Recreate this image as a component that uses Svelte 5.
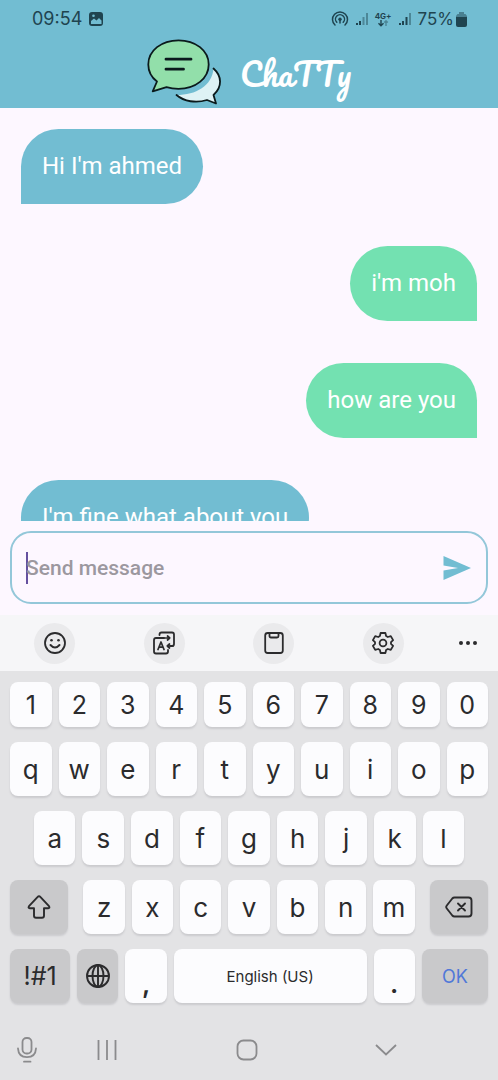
<script>
  const messages = [
    { text: "Hi I'm ahmed", mine: false },
    { text: "i'm moh", mine: true },
    { text: 'how are you', mine: true },
    { text: "I'm fine what about you", mine: false }
  ];
  const digits = [...'1234567890'];
  const top = [...'qwertyuiop'];
  const home = [...'asdfghjkl'];
  const bottom = [...'zxcvbnm'];

  let draft = $state('');
  const type = (c) => (draft += c);
</script>

<div class="phone">
  <header>
    <div class="status">
      <span class="time">09:54</span>
      <svg class="photo" width="16" height="16" viewBox="0 0 16 16">
        <rect x="1" y="1" width="14" height="14" rx="3" fill="#1f4450" />
        <path d="M3 10l3-2.500 2.500 2L11 7l2.500 2.500V13H3z" fill="#72bdd2" />
        <circle cx="5.500" cy="4.700" r="1.300" fill="#72bdd2" />
      </svg>
      <span class="spacer"></span>
      <svg width="18" height="18" viewBox="0 0 18 18" fill="none" stroke="#1f4450" stroke-width="1.500" stroke-linecap="round">
        <path d="M4 15a7.500 7.500 0 1 1 10 0M5.800 12.300a4.500 4.500 0 1 1 6.400 0" />
        <circle cx="9" cy="9.300" r="1.700" fill="#1f4450" stroke="none" />
        <path d="M9 10.500V13" />
      </svg>
      <svg width="14" height="14" viewBox="0 0 14 14" fill="#1f4450">
        <path d="M1 11h2v2H1zM4 9h2v4H4z" /><path opacity=".45" d="M7.500 5h2v8h-2zM11 1h2v12h-2z" />
      </svg>
      <span class="net">
        <span>4G+</span>
        <svg width="12" height="7" viewBox="0 0 12 7" fill="none" stroke="#1f4450" stroke-width="1.400">
          <path d="M4 0v5.500M1.500 3.300L4 5.800 6.500 3.300" /><path opacity=".45" d="M9 6V1M7.200 2.500L9 .8l1.800 1.700" />
        </svg>
      </span>
      <svg width="14" height="14" viewBox="0 0 14 14" fill="#1f4450">
        <path d="M1 11h2v2H1zM4 9h2v4H4zM7.500 5h2v8h-2z" /><path opacity=".45" d="M11 1h2v12h-2z" />
      </svg>
      <span class="charge">75%</span>
      <svg class="battery" width="11" height="15" viewBox="0 0 11 15" fill="#1f4450">
        <path opacity=".5" d="M3 0h5v2h1.500L11 4v1H0V4l1.500-2H3z" /><path d="M0 5h11v8q0 2-2 2H2q-2 0-2-2z" />
      </svg>
    </div>
    <div class="brand">
      <svg width="75" height="67" viewBox="147 38 75 67" stroke-linecap="round" stroke-linejoin="round">
        <path d="M213.500 68.500C222 76 222.500 87 213.500 95L216 103.500 207 100C196 103.500 184 101.500 176.500 95 196 95 212 86 213.500 68.500z" fill="#def2f5" />
        <path d="M213.500 68.500C222 76 222.500 87 213.500 95L216 103.500 207 100C196 103.500 184 101.500 176.500 95" fill="none" stroke="#0b1a1c" stroke-width="1.800" />
        <path d="M157 81.500C151 77 148.300 71 148.300 64.500 148.300 50.500 161.500 40.300 178.500 40.300S208.700 50.500 208.700 64.500 195.500 88.800 178.500 88.800Q172 88.800 166.500 87.200L152.700 91.300z" fill="#92dfaa" stroke="#0b1a1c" stroke-width="1.800" />
        <path d="M166 59.200h25M166 69.200h17.500" stroke="#0b1a1c" stroke-width="2.800" />
      </svg>
      <h1>ChaTTy</h1>
    </div>
  </header>

  <main>
    {#each messages as m}
      <p class="bubble" class:mine={m.mine}>{m.text}</p>
    {/each}
  </main>

  <form class="composer" onsubmit={(e) => e.preventDefault()}>
    <span class="caret"></span>
    <input type="text" placeholder="Send message" aria-label="Send message" bind:value={draft} />
    <button class="send" aria-label="Send">
      <svg width="28" height="24" viewBox="0 0 28 24"><path d="M.500 0L28 12 .500 24V14.500L15 12 .500 9.500z" fill="#72bdd2" /></svg>
    </button>
  </form>

  <div class="tools">
    <button aria-label="Emoji">
      <svg width="24" height="24" viewBox="0 0 24 24" fill="none" stroke="#2b2b2d" stroke-width="1.800" stroke-linecap="round">
        <circle cx="12" cy="12" r="10" /><path d="M7.500 14q4.500 5 9 0" stroke-width="2" />
        <g fill="#2b2b2d" stroke="none"><circle cx="8.500" cy="9.300" r="1.300" /><circle cx="15.500" cy="9.300" r="1.300" /></g>
      </svg>
    </button>
    <button aria-label="Translate">
      <svg width="24" height="24" viewBox="0 0 24 24" fill="none" stroke="#2b2b2d" stroke-width="1.800" stroke-linecap="round" stroke-linejoin="round">
        <path d="M7.500 4V3.500q0-2 2-2H20q2 0 2 2V13q0 2-2 2h-1.500" />
        <path d="M12 7H4Q2 7 2 9V20.500q0 2 2 2H14q2 0 2-2V19" />
        <path d="M6 18.500L9 11l3 7.500M7 16.200h4M11 7h6.500M15.500 5l2.200 2-2.200 2M21 15h-5M17.500 13l-2.200 2 2.200 2" stroke-width="1.700" />
      </svg>
    </button>
    <button aria-label="Clipboard">
      <svg width="24" height="24" viewBox="0 0 24 24" fill="none" stroke="#2b2b2d" stroke-width="1.800" stroke-linejoin="round">
        <rect x="3.200" y="2" width="17.600" height="20" rx="2.500" /><path d="M7.500 2v3q0 1.500 1.500 1.500h6q1.500 0 1.500-1.500V2" />
      </svg>
    </button>
    <button aria-label="Settings">
      <svg width="24" height="24" viewBox="0 0 24 24" fill="none" stroke="#2b2b2d" stroke-width="1.800" stroke-linejoin="round">
        <path d="M9.600 2h4.800l.7 3 1.700 1 3-.9 2.300 4L20 11.100v1.800l2.100 2-2.300 4-3-.9-1.700 1-.7 3H9.600l-.7-3-1.700-1-3 .9-2.300-4 2.100-2v-1.800l-2.100-2 2.300-4 3 .9 1.700-1z" />
        <circle cx="12" cy="12" r="3.400" />
      </svg>
    </button>
    <button class="plain" aria-label="More">
      <svg width="20" height="6" viewBox="0 0 20 6" fill="#2b2b2d"><circle cx="3" cy="3" r="2" /><circle cx="10" cy="3" r="2" /><circle cx="17" cy="3" r="2" /></svg>
    </button>
  </div>

  <div class="keys">
    <div class="row short">
      {#each digits as k}<button onclick={() => type(k)}>{k}</button>{/each}
    </div>
    <div class="row">
      {#each top as k}<button onclick={() => type(k)}>{k}</button>{/each}
    </div>
    <div class="row inset">
      {#each home as k}<button onclick={() => type(k)}>{k}</button>{/each}
    </div>
    <div class="row">
      <button class="dark shift" aria-label="Shift">
        <svg width="24" height="26" viewBox="0 0 24 26" fill="none" stroke="#2b2b2d" stroke-width="1.900" stroke-linejoin="round">
          <path d="M12 2.200q.7 0 1.300.7l8.700 9.300q1.200 1.800-.8 2H17v7.600q0 2-2 2H9q-2 0-2-2v-7.600H2.800q-2-.2-.8-2l8.700-9.300q.6-.7 1.300-.7z" />
        </svg>
      </button>
      {#each bottom as k}<button onclick={() => type(k)}>{k}</button>{/each}
      <button class="dark erase" aria-label="Backspace">
        <svg width="28" height="22" viewBox="0 0 28 22" fill="none" stroke="#2b2b2d" stroke-width="1.900" stroke-linecap="round" stroke-linejoin="round">
          <path d="M9.500 1.500H23.500q3 0 3 3v13q0 3-3 3H9.500q-1.300 0-2.200-1l-5.500-7q-1.200-1.500 0-3l5.500-7q.9-1 2.200-1z" />
          <path d="M13 7.500l7 7M20 7.500l-7 7" />
        </svg>
      </button>
    </div>
    <div class="row">
      <button class="dark symbols">!#1</button>
      <button class="dark" aria-label="Change language">
        <svg width="26" height="26" viewBox="0 0 26 26" fill="none" stroke="#2b2b2d" stroke-width="1.900">
          <circle cx="13" cy="13" r="11" /><ellipse cx="13" cy="13" rx="5.500" ry="11" /><path d="M13 2v22M2 13h22" />
        </svg>
      </button>
      <button class="mark" onclick={() => type(',')}>,</button>
      <button class="space" onclick={() => type(' ')}>English (US)</button>
      <button class="mark" onclick={() => type('.')}>.</button>
      <button class="dark ok">OK</button>
    </div>
  </div>

  <nav>
    <button aria-label="Voice input">
      <svg width="22" height="28" viewBox="0 0 22 28" fill="none" stroke="#8b8b8d" stroke-width="1.800" stroke-linecap="round">
        <rect x="6.500" y="2" width="9" height="15.500" rx="4" /><path d="M2 12.500q.5 8.700 9 8.700t9-8.700M8 25.700h6.500" />
      </svg>
    </button>
    <button aria-label="Recent apps">
      <svg width="20" height="20" viewBox="0 0 20 20" stroke="#8b8b8d" stroke-width="1.800"><path d="M1.500 0v20M10 0v20M18.500 0v20" /></svg>
    </button>
    <button aria-label="Home">
      <svg width="22" height="22" viewBox="0 0 22 22" fill="none" stroke="#8b8b8d" stroke-width="1.800"><rect x="1.500" y="1.500" width="19" height="19" rx="6" /></svg>
    </button>
    <button aria-label="Hide keyboard">
      <svg width="24" height="14" viewBox="0 0 24 14" fill="none" stroke="#8b8b8d" stroke-width="1.800"><path d="M2 2l10 9.500L22 2" /></svg>
    </button>
  </nav>
</div>

<style>
  :global(body) { margin: 0; }
  .phone {
    display: flex;
    flex-direction: column;
    height: 100vh;
    overflow: hidden;
    background: #fdf7ff;
    font-family: Roboto, sans-serif;
  }
  svg { display: block; flex: none; }
  button {
    display: flex;
    align-items: center;
    justify-content: center;
    padding: 0;
    border: 0;
    background: none;
    color: #2b2b2d;
    font-family: Inter, sans-serif;
  }
  header { background: #72bdd2; color: #1f4450; }
  .status {
    display: flex;
    align-items: center;
    gap: 6px;
    height: 38px;
    padding: 0 31px 0 32px;
    font: 18px/38px Inter, sans-serif;
  }
  .spacer { flex: 1; }
  .net {
    display: flex;
    flex-direction: column;
    align-items: center;
    font-size: 8px;
    font-weight: 700;
    line-height: 8px;
  }
  .charge { margin-right: -4px; font-size: 17px; }
  .brand {
    display: flex;
    align-items: center;
    justify-content: center;
    gap: 18px;
    height: 66px;
    padding-bottom: 4px;
  }
  h1 {
    margin: 0;
    padding-top: 4px;
    color: #fff;
    font: 400 32px/40px Pacifico, cursive;
  }
  main {
    display: flex;
    flex: 1;
    flex-direction: column;
    align-items: flex-start;
    gap: 42px;
    min-height: 0;
    box-sizing: border-box;
    padding: 21px 21px 0;
    overflow: hidden;
  }
  .bubble {
    flex: none;
    margin: 0;
    padding: 21px;
    border-radius: 38px 38px 38px 0;
    background: #72bdd2;
    color: #fff;
    font-size: 24px;
    line-height: 33px;
  }
  .mine {
    align-self: flex-end;
    border-radius: 38px 38px 0 38px;
    background: #73e1b1;
  }
  .composer {
    display: flex;
    flex: none;
    align-items: center;
    box-sizing: border-box;
    height: 73px;
    margin: 10px 10px 11px;
    padding: 0 15px 0 14px;
    border: 2px solid #93c7d9;
    border-radius: 21px;
  }
  .caret { width: 2px; height: 32px; margin-right: -2px; background: #65509f; }
  input {
    flex: 1;
    min-width: 0;
    padding: 0;
    border: 0;
    outline: 0;
    background: none;
    color: #2b2b2d;
    font: 500 21px/32px Roboto, sans-serif;
  }
  input::placeholder { color: #9c989f; opacity: 1; }
  .tools {
    display: grid;
    flex: none;
    grid-template-columns: repeat(4, 1fr) 60px;
    align-items: center;
    justify-items: center;
    height: 56px;
    background: #f6f6f8;
  }
  .tools button {
    width: 41px;
    height: 41px;
    border-radius: 50%;
    background: #eaeaec;
  }
  .tools .plain { background: none; }
  .keys {
    display: flex;
    flex: none;
    flex-direction: column;
    gap: 15px;
    padding: 11px 10px 16px;
    background: #e3e3e5;
  }
  .row { display: flex; gap: 7px; height: 54px; }
  .short { height: 45px; }
  .inset { padding: 0 5%; }
  .row button {
    flex: 41 1 0;
    min-width: 0;
    border-radius: 8px;
    background: #fcfcfe;
    box-shadow: 0 2px 2px #cbcbce;
    font-size: 26px;
  }
  .row.short button { font-size: 25px; }
  .row .dark { background: #c9c9cb; }
  .row .shift { flex-grow: 58; margin-right: 8px; }
  .row .erase { flex-grow: 58; margin-left: 8px; }
  .row .symbols { flex-grow: 60; font-size: 25px; }
  .row .space { flex-grow: 192; font-size: 15px; }
  .row .ok { flex-grow: 66; color: #5078d8; font-size: 18px; }
  .row .mark { padding-top: 14px; font-weight: 600; }
  nav {
    display: grid;
    flex: none;
    grid-template-columns: 54fr 106fr 173fr 105fr 60fr;
    align-items: center;
    height: 61px;
    background: #e3e3e5;
  }
</style>
